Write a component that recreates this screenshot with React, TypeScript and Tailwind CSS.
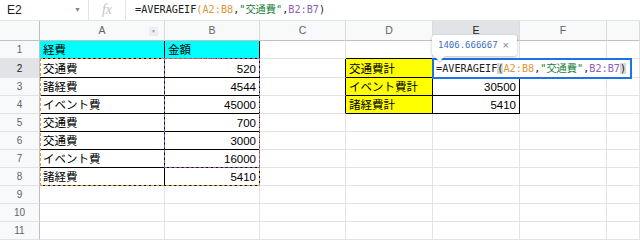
import React from 'react';

const CELL_FONT = "font-['Liberation_Sans','Noto_Sans_CJK_JP',sans-serif]";
const MONO_FONT = "font-['DejaVu_Sans_Mono','Noto_Sans_CJK_JP',monospace]";

// G is only partly visible, its label is off-screen
const COLS = [
  { key: 'A', w: 'w-[125px]', label: 'A' },
  { key: 'B', w: 'w-[95px]', label: 'B' },
  { key: 'C', w: 'w-[86px]', label: 'C' },
  { key: 'D', w: 'w-[87px]', label: 'D' },
  { key: 'E', w: 'w-[87px]', label: 'E' },
  { key: 'F', w: 'w-[87px]', label: 'F' },
  { key: 'G', w: 'w-[33px]', label: '' },
];

const ROW_H: Record<number, string> = {
  1: 'h-[18px]',
  2: 'h-[19px]',
  3: 'h-[18px]',
  4: 'h-[18px]',
  5: 'h-[18px]',
  6: 'h-[18px]',
  7: 'h-[18px]',
  8: 'h-[18px]',
  9: 'h-[18px]',
  10: 'h-[18px]',
  11: 'h-[18px]',
};

const DATA: Record<string, { text: string; right?: boolean; bg?: string }> = {
  A1: { text: '経費', bg: 'bg-[#00ffff]' },
  B1: { text: '金額', bg: 'bg-[#00ffff]' },
  A2: { text: '交通費' },
  B2: { text: '520', right: true },
  A3: { text: '諸経費' },
  B3: { text: '4544', right: true },
  A4: { text: 'イベント費' },
  B4: { text: '45000', right: true },
  A5: { text: '交通費' },
  B5: { text: '700', right: true },
  A6: { text: '交通費' },
  B6: { text: '3000', right: true },
  A7: { text: 'イベント費' },
  B7: { text: '16000', right: true },
  A8: { text: '諸経費' },
  B8: { text: '5410', right: true },
  D2: { text: '交通費計', bg: 'bg-[#ffff00]' },
  D3: { text: 'イベント費計', bg: 'bg-[#ffff00]' },
  D4: { text: '諸経費計', bg: 'bg-[#ffff00]' },
  E3: { text: '30500', right: true },
  E4: { text: '5410', right: true },
};

const blackRight = (c: string, r: number) =>
  (['A', 'B'].includes(c) && r <= 8) ||
  (c === 'C' && r >= 2 && r <= 4) ||
  (['D', 'E'].includes(c) && r >= 2 && r <= 4);

const blackBottom = (c: string, r: number) =>
  (['A', 'B'].includes(c) && r <= 8) || (['D', 'E'].includes(c) && r >= 1 && r <= 4);

const Formula = ({ editor }: { editor?: boolean }) => (
  <span className={`${MONO_FONT} text-[10.2px] text-[#202124] whitespace-nowrap`}>
    =AVERAGEIF
    <span className={editor ? 'bg-[#d9d9d9]' : 'text-[#e0963b]'}>(</span>
    <span className="text-[#e0963b]">A2:B8</span>,
    <span className="text-[#188038]">"交通費"</span>,
    <span className="text-[#8e5eb6]">B2:B7</span>
    <span className={editor ? 'bg-[#d9d9d9]' : ''}>)</span>
  </span>
);

const Cell = ({ c, r }: { c: { key: string; w: string }; r: number }) => {
  const d = DATA[`${c.key}${r}`];
  const br = blackRight(c.key, r) ? 'border-r-black' : 'border-r-[#e2e3e3]';
  const bb = blackBottom(c.key, r) ? 'border-b-black' : 'border-b-[#e2e3e3]';
  return (
    <div
      className={`${c.w} shrink-0 border-r border-b ${br} ${bb} ${d?.bg ?? 'bg-white'} flex items-end pb-[1px] px-[3px] overflow-hidden whitespace-nowrap ${
        d?.right ? 'justify-end' : 'justify-start'
      }`}
    >
      {d && <span className={`${CELL_FONT} text-[11.5px] leading-[14px] text-black`}>{d.text}</span>}
    </div>
  );
};

export default function App() {
  const rows = [1, 2, 3, 4, 5, 6, 7, 8, 9, 10, 11];
  return (
    <div className={`w-[640px] h-[240px] overflow-hidden bg-white ${CELL_FONT}`}>
      {/* formula bar */}
      <div className="h-[21px] flex items-stretch border-b border-[#e2e3e3]">
        <div className="w-[89px] flex items-center justify-between pl-[7px] pr-[7px] border-r border-[#e2e3e3]">
          <span className="text-[12px] text-[#202124]">E2</span>
          <span className="text-[7px] text-[#80868b]">▼</span>
        </div>
        <div className="w-[37px] flex items-center justify-center border-r border-[#e2e3e3]">
          <span className="font-['Liberation_Serif',serif] italic text-[14px] text-[#c4c4c4] leading-none">fx</span>
        </div>
        <div className="flex items-center pl-[9px]">
          <Formula />
        </div>
      </div>

      {/* grid */}
      <div className="relative">
        <div className="flex h-[20px] bg-[#f8f9fa]">
          <div className="w-[40px] shrink-0 border-r border-b border-[#c0c0c0]" />
          {COLS.map((c) => (
            <div
              key={c.key}
              className={`${c.w} shrink-0 relative flex items-center justify-center border-r border-r-[#dadce0] border-b border-b-[#c0c0c0] text-[10.5px] text-[#5f6368] ${
                c.key === 'E' ? 'bg-[#e1e3e6] text-[#202124]' : ''
              }`}
            >
              {c.label}
              {c.key === 'A' && (
                <span className="absolute right-[6px] top-[6px] w-[9px] h-[9px] flex items-center justify-center text-[5px] text-[#9aa0a6] bg-[#eceff1]">
                  ▼
                </span>
              )}
            </div>
          ))}
        </div>

        {rows.map((r) => (
          <div key={r} className={`flex ${ROW_H[r]}`}>
            <div
              className={`w-[40px] shrink-0 flex items-center justify-center border-r border-r-[#c0c0c0] border-b border-b-[#e2e3e3] text-[10px] text-[#5f6368] ${
                r === 2 ? 'bg-[#e1e3e6] text-[#202124]' : 'bg-[#f8f9fa]'
              }`}
            >
              {r}
            </div>
            {COLS.map((c) => (
              <Cell key={c.key} c={c} r={r} />
            ))}
          </div>
        ))}

        {/* range highlights */}
        <div className="absolute left-[40px] top-[37px] w-[220px] h-[128px] border border-dashed border-[#e0963b] pointer-events-none" />
        <div className="absolute left-[164px] top-[37px] w-[96px] h-[110px] border border-dashed border-[#8e5eb6] pointer-events-none" />

        {/* in-cell editor */}
        <div className="absolute left-[432px] top-[37px] w-[200px] h-[21px] border-2 border-[#1a73e8] bg-white flex items-center pl-[2px]">
          <Formula editor />
        </div>

        {/* value preview tooltip */}
        <div className="absolute left-[432px] top-[14px] w-[85px] h-[21px] bg-white rounded-[3px] shadow-[0_1px_3px_rgba(60,64,67,0.35)] flex items-center pl-[6px] gap-[5px]">
          <span className={`${MONO_FONT} text-[9px] text-[#3d6fc4]`}>1406.666667</span>
          <span className="text-[11px] text-[#80868b] leading-none">×</span>
          <span className="absolute left-[4px] bottom-[-4px] w-[7px] h-[7px] bg-white rotate-45 shadow-[1px_1px_1px_rgba(60,64,67,0.25)]" />
        </div>
      </div>
    </div>
  );
}
